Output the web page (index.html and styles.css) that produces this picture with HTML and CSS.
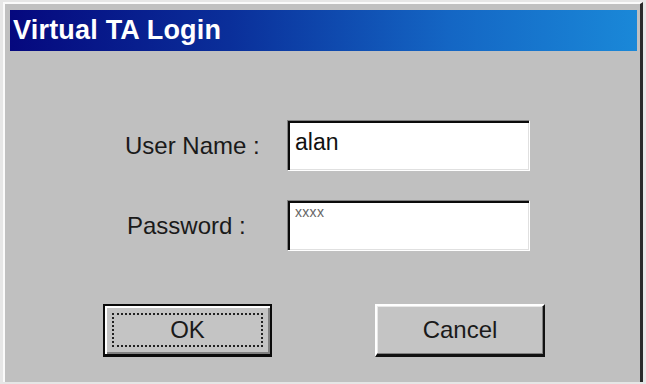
FILE: index.html
```html
<!DOCTYPE html>
<html>
<head>
<meta charset="utf-8">
<link rel="stylesheet" href="styles.css">
</head>
<body>
<div class="window">
  <div class="titlebar"><span class="title">Virtual TA Login</span></div>
  <div class="form">
    <label class="label">User Name :</label>
    <div class="field"><span class="value">alan</span></div>
    <label class="label">Password :</label>
    <div class="field"><span class="mask">xxxx</span></div>
  </div>
  <div class="buttons">
    <div class="btn default"><div class="focus">OK</div></div>
    <div class="btn">Cancel</div>
  </div>
</div>
</body>
</html>
```
FILE: styles.css
```css
html, body {
  margin: 0;
  padding: 0;
  background: #e6e6e6;
  width: 646px;
  height: 384px;
  overflow: hidden;
}
.window {
  margin: 2px 3px 0 3px;
  height: 380px;
  box-sizing: border-box;
  background: #c0c0c0;
  border-left: 2px solid #fafafa;
  border-top: 2px solid #fafafa;
  border-right: 3px solid #2a2a2a;
  padding: 6px 3px 0 5px;
  font-family: "Liberation Sans", Arial, sans-serif;
  color: #111;
}
.titlebar {
  height: 41px;
  background: linear-gradient(to right, #05087e 0%, #0a2f9a 35%, #1466c4 70%, #1a88d8 100%);
  display: flex;
  align-items: center;
  padding-left: 3px;
}
.title {
  color: #fff;
  font-weight: bold;
  font-size: 27px;
  letter-spacing: 0.2px;
}
.form {
  display: grid;
  grid-template-columns: 162px 243px;
  grid-auto-rows: 51px;
  row-gap: 29px;
  margin: 69px 0 0 115px;
  align-items: center;
}
.label {
  font-size: 24px;
  color: #1a1a1a;
}
.label:nth-of-type(2) {
  padding-left: 2px;
}
.field {
  height: 51px;
  box-sizing: border-box;
  background: #fff;
  border-top: 1px solid #808080;
  border-left: 1px solid #808080;
  border-right: 1px solid #fff;
  border-bottom: 1px solid #fff;
  box-shadow: inset 2px 2px 0 #0a0a0a, inset -1px -1px 0 #e0e0e0;
  padding: 2px 0 0 7px;
}
.value {
  font-size: 23px;
  line-height: 38px;
  color: #111;
}
.mask {
  font-size: 14px;
  line-height: 18px;
  color: #666;
  letter-spacing: 0.3px;
}
.buttons {
  display: flex;
  gap: 103px;
  margin: 53px 0 0 93px;
}
.btn {
  width: 170px;
  height: 53px;
  box-sizing: border-box;
  background: #c4c4c4;
  border-top: 2px solid #fff;
  border-left: 2px solid #fff;
  border-right: 2px solid #111;
  border-bottom: 3px solid #111;
  box-shadow: inset -1px -1px 0 #808080, inset 1px 1px 0 #e8e8e8;
  display: flex;
  align-items: center;
  justify-content: center;
  font-size: 24px;
  color: #1a1a1a;
}
.btn.default {
  width: 169px;
  border: 2px solid #0a0a0a;
  border-bottom-width: 3px;
  box-shadow: inset 2px 2px 0 #fff, inset -2px -2px 0 #808080;
  padding: 7px 7px 7px 7px;
}
.focus {
  flex: 1;
  align-self: stretch;
  border: 2px dotted #222;
  display: flex;
  align-items: center;
  justify-content: center;
}
```
